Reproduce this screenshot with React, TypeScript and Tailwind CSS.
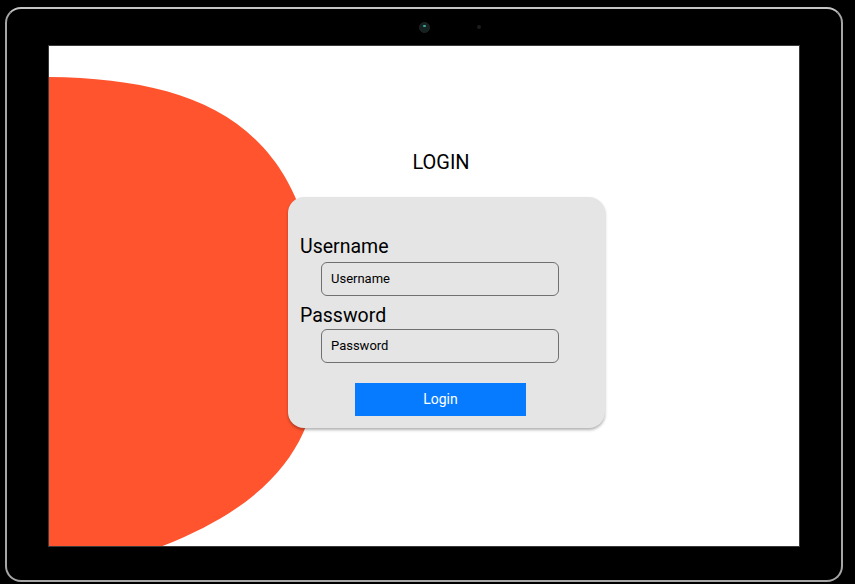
import React from 'react';

export default function App() {
  return (
    <div className="w-[855px] h-[584px] bg-black overflow-hidden pt-[7px] pl-[5px] font-['Roboto',sans-serif]">
      {/* Tablet frame */}
      <div className="w-[838px] h-[575px] rounded-[16px] border-2 border-[#a6a6a6] border-t-[#c4c4c4] bg-black flex flex-col">
        {/* Top bezel with camera */}
        <div className="h-[36px] flex items-center pl-[412px]">
          <div className="w-[11px] h-[11px] rounded-full bg-[#142222] border border-[#222] relative">
            <div className="absolute left-[3px] top-[2px] w-[3px] h-[2px] rounded-full bg-[#3fa89a]" />
          </div>
          <div className="ml-[47px] w-[4px] h-[4px] rounded-full bg-[#1c1c1c]" />
        </div>

        {/* Screen */}
        <div className="ml-[41px] w-[752px] h-[502px] border border-[#3a3a3a] bg-white relative overflow-hidden">
          {/* Decorative blob */}
          <svg
            className="absolute left-0 top-0"
            width="750"
            height="500"
            viewBox="49 46 750 500"
          >
            <path
              d="M 30 77 C 135 76, 222 93, 272 158 C 310 205, 330 300, 318 360 C 318 440, 275 505, 152 550 L 152 560 L 30 560 Z"
              fill="#ff542e"
            />
          </svg>

          <div className="relative ml-[239px] w-[317px] pt-[102px] flex flex-col">
            <h1 className="text-[20px] leading-[28px] text-black text-center pr-[11px]">LOGIN</h1>

            {/* Login card */}
            <div className="mt-[21px] bg-[#e5e5e5] rounded-[16px] shadow-[0_2px_3px_rgba(0,0,0,0.3)] pt-[38px] pb-[12px] px-[12px] flex flex-col">
              <label className="text-[19.5px] leading-[24px] text-black">Username</label>
              <div className="mt-[3px] ml-[21px] w-[238px] h-[34px] rounded-[6px] border border-[#707070] flex items-center px-[9px] text-[13px] text-black">
                Username
              </div>
              <label className="mt-[8px] text-[19.5px] leading-[24px] text-black">Password</label>
              <div className="mt-[1px] ml-[21px] w-[238px] h-[34px] rounded-[6px] border border-[#707070] flex items-center px-[9px] text-[13px] text-black">
                Password
              </div>
              <button className="mt-[20px] ml-[55px] w-[171px] h-[33px] bg-[#077bff] text-white text-[14px]">
                Login
              </button>
            </div>
          </div>
        </div>
      </div>
    </div>
  );
}
